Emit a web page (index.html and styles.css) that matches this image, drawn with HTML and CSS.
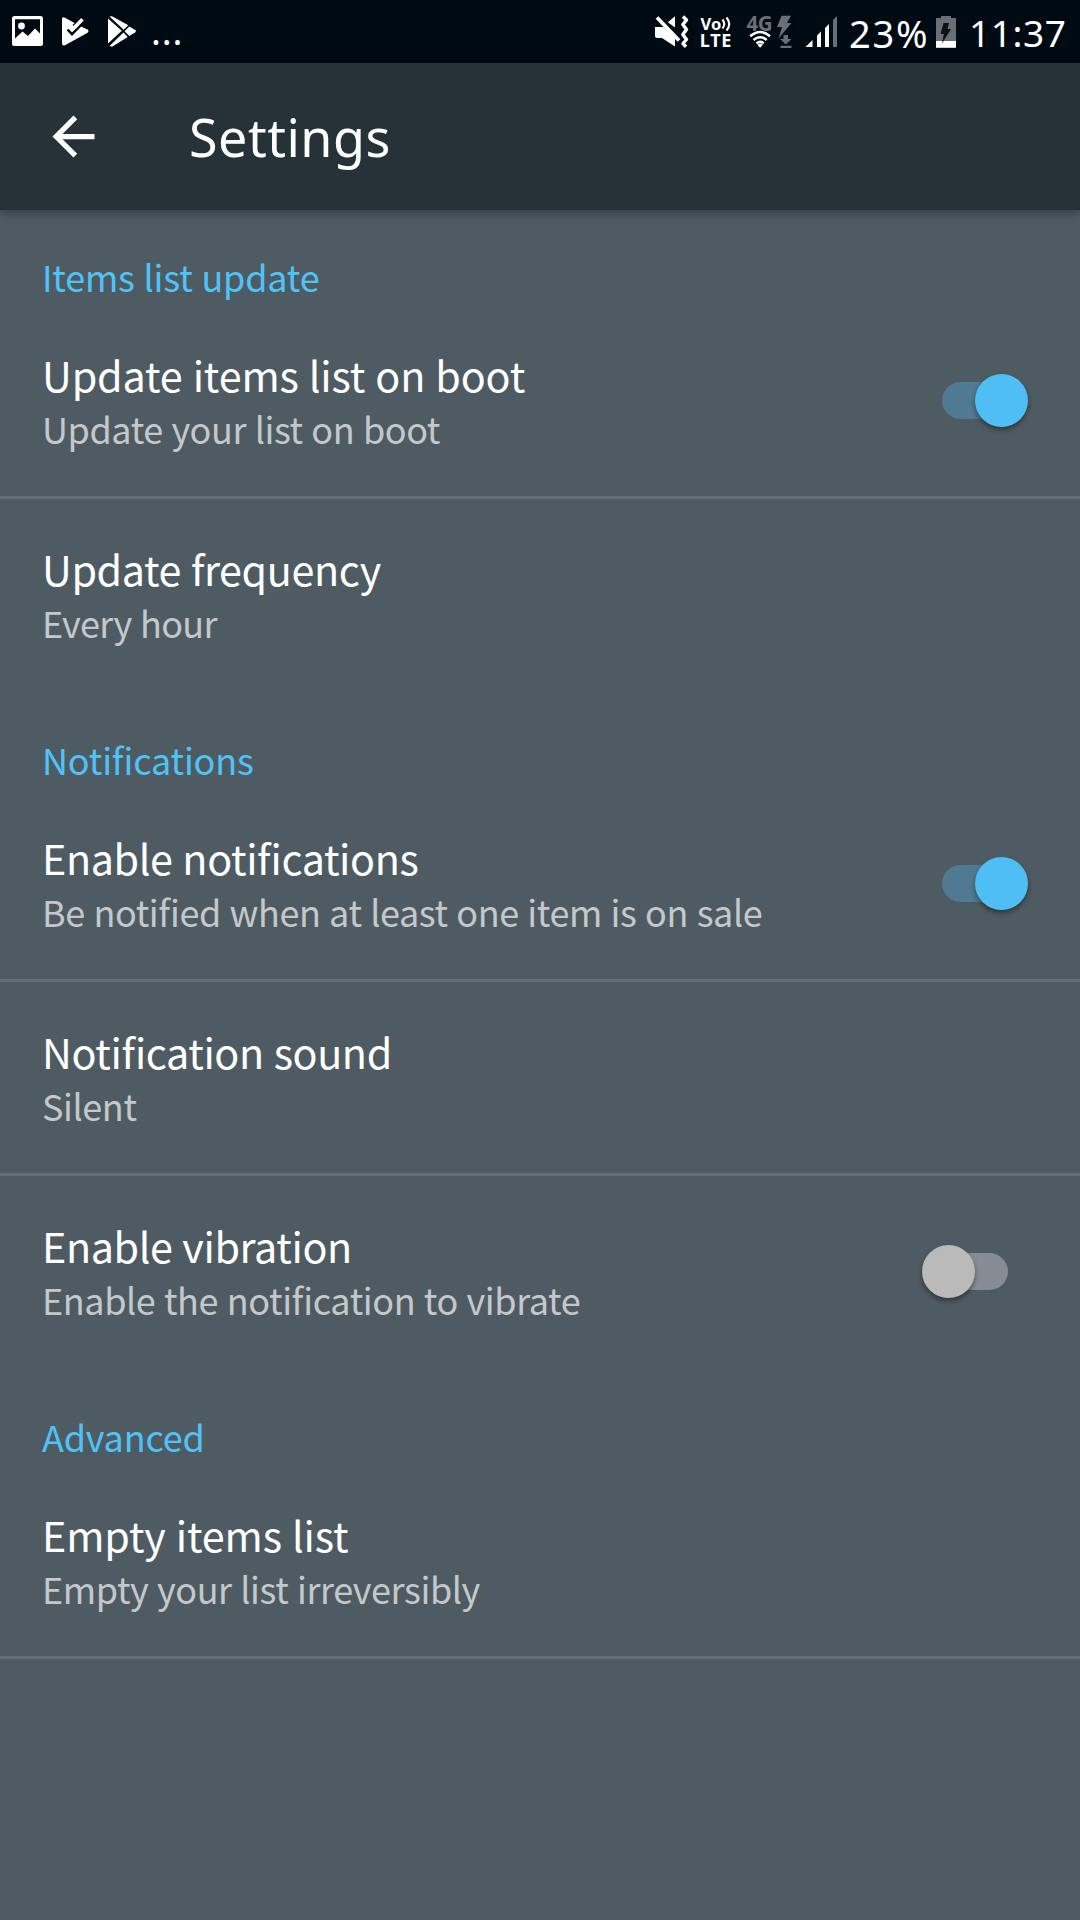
FILE: index.html
```html
<!DOCTYPE html>
<html lang="en">
<head>
<meta charset="utf-8">
<title>Settings</title>
<link rel="stylesheet" href="styles.css">
</head>
<body>
<div class="status-bar">
  <svg class="st-image" width="32" height="40" viewBox="12 12 32 40"><path fill="#fff" fill-rule="evenodd" d="M14.500 16H40.500a2.500 2.500 0 0 1 2.500 2.500V43.500a2.500 2.500 0 0 1-2.500 2.500H14.500a2.500 2.500 0 0 1-2.500-2.500V18.500A2.500 2.500 0 0 1 14.500 16ZM15 19.300V38.500L22.500 31.500L28 36L35 28.500L40 33.500V19.300Z"/><circle cx="21.500" cy="26" r="3.400" fill="#fff"/></svg>
  <svg class="st-check" width="28" height="40" viewBox="62 12 28 40"><path fill="#fff" d="M62 19q0-2.500 2.500-1.500L75.500 23.500 80 26 88 29.800q1.300 1.700-.4 3L65 45.300q-3 1-3-2Z"/><path d="M73 25.500 82 17" fill="none" stroke="#000a12" stroke-width="1.500"/><path d="M67.500 29.500 72 34.200 84 22" fill="none" stroke="#000a12" stroke-width="2.400"/><path d="M72.500 29.500 82.500 19.300" fill="none" stroke="#fff" stroke-width="3.600"/></svg>
  <svg class="st-play" width="30" height="40" viewBox="107 12 30 40"><g fill="#fff"><path d="M108 18.500V43.500L121.800 30.800Z"/><path d="M109.500 16.500 112 16.300 128.300 25.300 123.700 29.700Z"/><path d="M129.300 26.500 135.300 30q1.500 1.100 0 2.200L129.300 35.900 124.600 31.200Z"/><path d="M109.500 46 112 46.800 127.700 37 123.500 32.500Z"/></g></svg>
  <span class="st-more">...</span>
  <span class="st-spring"></span>
  <svg class="st-mute" width="36" height="40" viewBox="654 12 36 40"><g fill="#fff"><path d="M655 27H663.500L675 38V46.500L662 38H657q-2 0-2-2Z"/><path d="M675 16.300V27.500L667.800 22.300Z"/></g><path d="M657 17.500 679 40.500" stroke="#fff" stroke-width="3.800"/><path d="M683 16.500 686.500 20 682.800 24.500 686.500 29.500 682.800 34.500 686.500 39.500 683 43.500 686 46.800" fill="none" stroke="#fff" stroke-width="3.400" stroke-linejoin="round"/></svg>
  <svg class="st-volte" width="32" height="40" viewBox="700 12 32 40"><g fill="#fff" class="badge-text"><text x="700.500" y="30" font-size="16.500">Vo</text><text x="699.800" y="47" font-size="18" textLength="31.500">LTE</text></g><path d="M722.500 19.500q3.500 4.500 0 9M726.500 17.500q5.500 6.500 0 13" fill="none" stroke="#fff" stroke-width="2.100"/></svg>
  <svg class="st-data" width="48" height="40" viewBox="746 12 48 40"><text x="746.500" y="31" font-size="20.500" textLength="26" fill="#686f76" class="badge-text">4G</text><path fill="#686f76" d="M781.500 15.800H791L787 23H791.500L778.500 38.500 782 27H777Z"/><path fill="#686f76" d="M783.500 35H788V39H791.500L785.800 44.600 780 39H783.500ZM780.500 45.800H791.500V48H780.500Z"/><path d="M751 37q9-8 18 0" fill="none" stroke="#000a12" stroke-width="6"/><g fill="none" stroke="#fff" stroke-width="2.500"><path d="M750.200 36.300q9.900-8.600 19.800 0"/><path d="M753.500 40q6.600-5.600 13.200 0"/><path d="M756.500 43.400q3.600-3 7.200 0"/></g><path fill="#fff" d="M757.300 44.800q2.800-2 5.600 0L760.100 47.800Z"/></svg>
  <svg class="st-signal" width="35" height="40" viewBox="804 12 35 40"><g fill="#fff"><path d="M805.500 47 812.500 40V47Z"/><path d="M817 35.500 821 31.500V47H817Z"/><path d="M825 28 829 24V47H825Z"/></g><path fill="#686f76" d="M833 20 837 16V47H833Z"/></svg>
  <span class="st-percent">23%</span>
  <svg class="st-battery" width="22" height="40" viewBox="936 12 22 40"><path fill="#686f76" d="M941 16H951V18H956V41H936V18H941Z"/><path fill="#fff" d="M936 41H956V47.800H936Z"/><path fill="#111" d="M943.500 23H949L947.500 29H951L942 43.500 943.800 34H940.500Z"/></svg>
  <span class="st-time">11:37</span>
</div>
<header class="app-bar">
  <svg class="back" width="63" height="63" viewBox="0 0 24 24"><path fill="#fff" d="M20 11H7.830l5.590-5.590L12 4l-8 8 8 8 1.410-1.410L7.830 13H20v-2z"/></svg>
  <h1 class="app-title">Settings</h1>
</header>
<main class="list">
  <h2 class="section">Items list update</h2>
  <div class="row divided">
    <div class="text"><div class="title">Update items list on boot</div><div class="summary">Update your list on boot</div></div>
    <div class="switch on"><div class="thumb"></div></div>
  </div>
  <div class="row">
    <div class="text"><div class="title tight">Update frequency</div><div class="summary tight">Every hour</div></div>
  </div>
  <h2 class="section">Notifications</h2>
  <div class="row divided">
    <div class="text"><div class="title tight">Enable notifications</div><div class="summary">Be notified when at least one item is on sale</div></div>
    <div class="switch on"><div class="thumb"></div></div>
  </div>
  <div class="row divided">
    <div class="text"><div class="title tight">Notification sound</div><div class="summary">Silent</div></div>
  </div>
  <div class="row">
    <div class="text"><div class="title tight">Enable vibration</div><div class="summary">Enable the notification to vibrate</div></div>
    <div class="switch"><div class="thumb"></div></div>
  </div>
  <h2 class="section">Advanced</h2>
  <div class="row divided">
    <div class="text"><div class="title">Empty items list</div><div class="summary">Empty your list irreversibly</div></div>
  </div>
</main>
</body>
</html>
```
FILE: styles.css
```css
* { box-sizing: border-box; }

body {
  margin: 0;
  width: 1080px;
  height: 1920px;
  overflow: hidden;
  background: #4f5b62;
  color: #fff;
  font-family: "Noto Sans CJK SC", "Noto Sans", sans-serif;
  font-feature-settings: "liga" 1;
}

h1, h2 { margin: 0; font-weight: 400; }

/* Status bar */
.status-bar {
  display: flex;
  align-items: flex-start;
  height: 63px;
  padding-left: 12px;
  background: #000a12;
  font-family: "Noto Sans", sans-serif;
  font-size: 37px;
  line-height: 66px;
  white-space: nowrap;
}
.status-bar svg { flex: none; margin-top: 12px; overflow: visible; }
.badge-text { font-family: "Noto Sans", sans-serif; font-weight: 700; }
.st-check { margin-left: 18px; }
.st-play { margin-left: 17px; }
.st-more { margin-left: 14px; letter-spacing: .8px; line-height: 62px; }
.st-spring { flex: 1; }
.st-volte { margin-left: 10px; }
.st-data { margin-left: 14px; }
.st-signal { margin-left: 10px; }
.st-percent { width: 87px; margin-left: 10px; font-size: 38px; letter-spacing: 1.8px; }
.st-time { width: 111px; margin-left: 11px; letter-spacing: .6px; }

/* App bar */
.app-bar {
  position: relative;
  display: flex;
  align-items: center;
  height: 147px;
  padding-left: 42px;
  background: #263238;
  box-shadow: 0 3px 10px rgba(0, 0, 0, .35);
}
.app-title {
  margin-left: 84px;
  padding-top: 1px;
  font: 400 52px/72px "Noto Sans", sans-serif;
  letter-spacing: .5px;
}

/* Preferences */
.section {
  height: 95px;
  padding: 42px 42px 5px;
  color: #4fc3f7;
  font-size: 36px;
  line-height: 48px;
  letter-spacing: -.2px;
  word-spacing: 1px;
}
.row {
  display: flex;
  align-items: center;
  justify-content: space-between;
  height: 194px;
  padding: 0 72px 0 42px;
  border-bottom: 3px solid transparent;
}
.divided { border-bottom-color: #636f77; }
.text { height: 107px; }
.title {
  font-size: 41.300px;
  line-height: 54px;
  letter-spacing: -.15px;
  word-spacing: 1px;
}
.title.tight { letter-spacing: -.4px; }
.summary {
  margin-top: 3px;
  color: #c4c8ca;
  font-size: 36px;
  line-height: 48px;
  letter-spacing: -.42px;
  word-spacing: 1px;
}
.summary.tight { letter-spacing: -.7px; }

.switch {
  position: relative;
  width: 66px;
  height: 37px;
  border-radius: 19px;
  background: #848d93;
}
.thumb {
  position: absolute;
  top: -8px;
  left: -20px;
  width: 53px;
  height: 53px;
  border-radius: 50%;
  background: #bababa;
  box-shadow: 0 3px 5px rgba(0, 0, 0, .4);
}
.on { background: #4f7a91; }
.on .thumb { left: 33px; background: #4fbef5; }
```
